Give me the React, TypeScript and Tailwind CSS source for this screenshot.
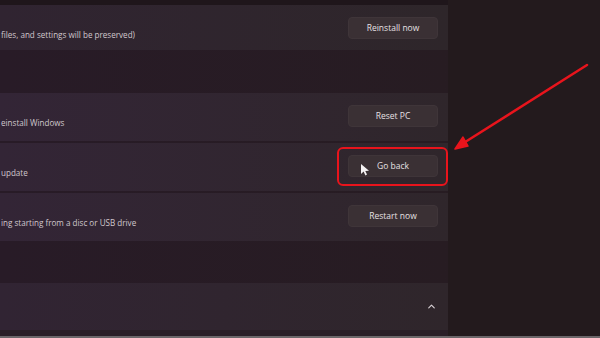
import { ChevronUp } from "lucide-react";

type Row = { text: string; button: string; highlight?: boolean };

const rowsA: Row[] = [{ text: "files, and settings will be preserved)", button: "Reinstall now" }];

const rowsB: Row[] = [
  { text: "einstall Windows", button: "Reset PC" },
  { text: "update", button: "Go back", highlight: true },
  { text: "ing starting from a disc or USB drive", button: "Restart now" },
];

function Button({ label, highlight }: { label: string; highlight?: boolean }) {
  return (
    <div className="relative">
      <div className="w-[90px] h-[22px] rounded-[4px] bg-[#3a3034] border border-[#3f3539] flex items-center justify-center text-[8.5px] text-[#e6e0e3] font-medium">
        {label}
      </div>
      {highlight && (
        <>
          <div className="absolute -left-[11px] -top-[8px] w-[111px] h-[39px] rounded-[6px] border-2 border-[#e8141c]" />
          <svg className="absolute left-[12px] top-[8px]" width="11" height="13" viewBox="0 0 11 13">
            <path d="M1 1 L1 11 L3.6 8.6 L5.4 12.4 L7 11.6 L5.3 8 L9 7.8 Z" fill="#f4f1f2" />
          </svg>
        </>
      )}
    </div>
  );
}

function Card({ row }: { row: Row }) {
  return (
    <div className="h-[48px] bg-gradient-to-r from-[#332536] to-[#2f262b] flex items-start justify-between pr-[10px]">
      <span className="mt-[24px] pl-[1px] text-[8.1px] text-[#d0c7cd] leading-[12px]">{row.text}</span>
      <div className="mt-[12px]">
        <Button label={row.button} highlight={row.highlight} />
      </div>
    </div>
  );
}

export default function App() {
  return (
    <div
      className="relative w-[600px] h-[338px] overflow-hidden bg-[#231a1d] flex"
      style={{ fontFamily: '"Open Sans", "Noto Sans", sans-serif' }}
    >
      <div className="w-[448px] flex flex-col bg-gradient-to-r from-[#281b27] to-[#271c22]">
        <div className="h-[5px] bg-[#1f161b]" />
        <div className="h-[45px] bg-gradient-to-r from-[#302431] to-[#2e262a] flex items-start justify-between pr-[10px]">
          <span className="mt-[24px] pl-[1px] text-[8.1px] text-[#d0c7cd] leading-[12px]">{rowsA[0].text}</span>
          <div className="mt-[12px]">
            <Button label={rowsA[0].button} />
          </div>
        </div>
        <div className="h-[43px]" />
        <div className="flex flex-col gap-[2px]">
          {rowsB.map((r) => (
            <Card key={r.button} row={r} />
          ))}
        </div>
        <div className="h-[42px]" />
        <div className="h-[47px] bg-gradient-to-r from-[#312433] to-[#2f262b] flex items-center justify-end pr-[11px]">
          <ChevronUp size={11} strokeWidth={2.5} color="#d9d2d6" />
        </div>
        <div className="flex-1 bg-[#2a1e27]" />
        <div className="h-[2px] bg-[#6b6669]" />
      </div>
      <div className="flex-1 flex flex-col">
        <div className="flex-1" />
        <div className="h-[2px] bg-[#6b6669]" />
      </div>
      <svg className="absolute left-0 top-0" width="600" height="338" viewBox="0 0 600 338">
        <line x1="587" y1="65" x2="462" y2="144" stroke="#e8141c" strokeWidth="2.5" strokeLinecap="round" />
        <path d="M455 149 L463 137 L468 146 Z" fill="#e8141c" stroke="#e8141c" strokeWidth="1.5" strokeLinejoin="round" />
      </svg>
    </div>
  );
}
